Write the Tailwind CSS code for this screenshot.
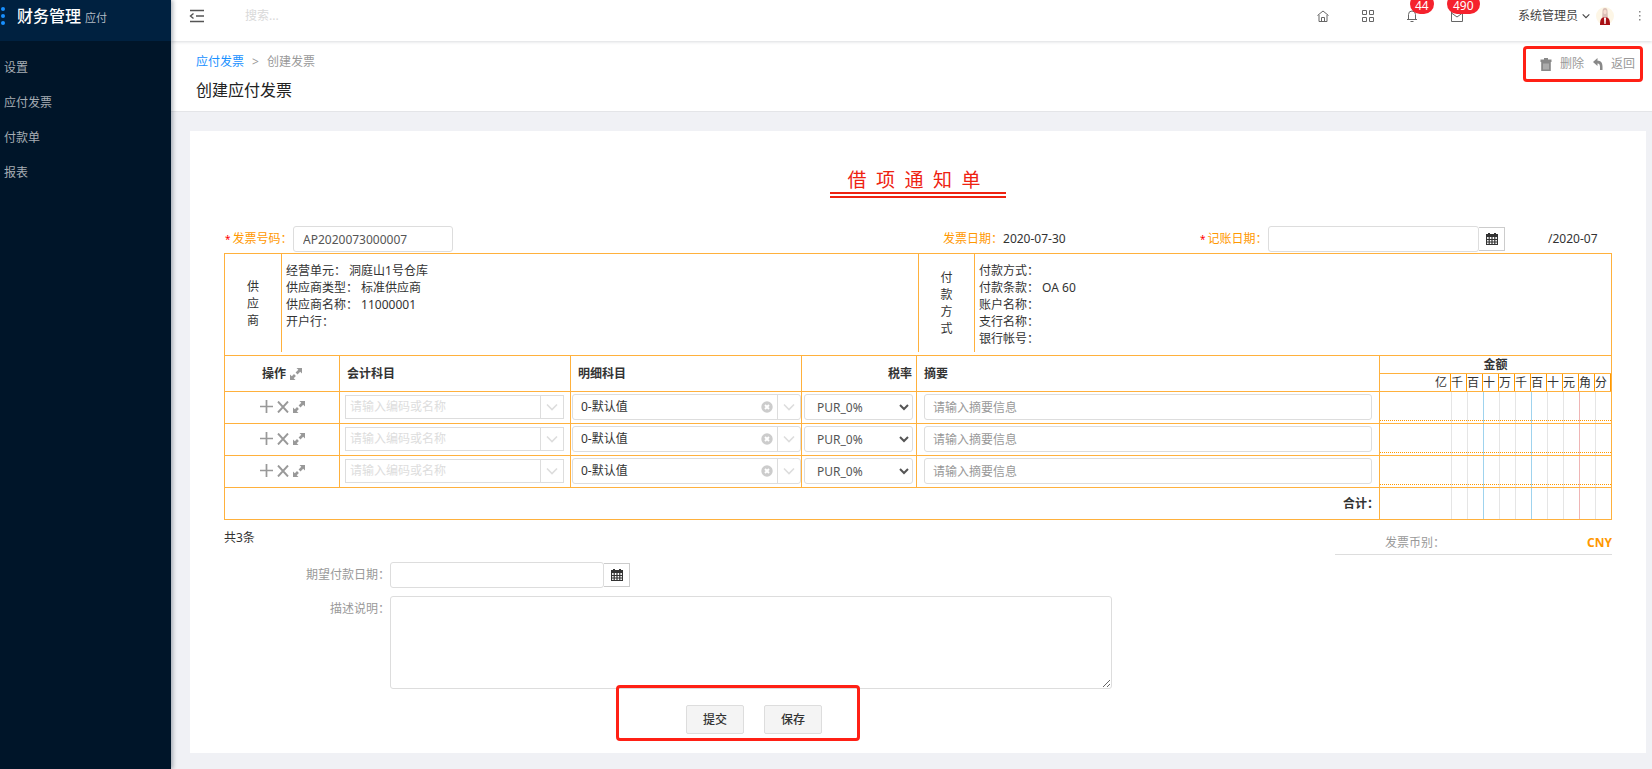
<!DOCTYPE html>
<html lang="zh-CN">
<head>
  <meta charset="UTF-8" />
  <meta name="viewport" content="width=device-width, initial-scale=1.0" />
  <title>创建应付发票</title>
  <script src="https://cdn.jsdelivr.net/npm/@tailwindcss/browser@4"></script>
</head>
<body class="flex min-h-screen bg-[#f0f1f5] font-['Noto_Sans','Noto_Sans_CJK_SC',sans-serif] text-xs text-[#333]">

  <!-- icons -->
  <svg class="hidden">
    <symbol id="i-expand" viewBox="0 0 12 12">
      <path d="M6.500 0H12v5.500l-1.800-1.800-2.700 2.700-1.900-1.900 2.700-2.700zM5.500 12H0V6.500l1.800 1.800 2.200-2.200 1.900 1.900-2.200 2.200z" fill="currentColor" />
    </symbol>
    <symbol id="i-plus" viewBox="0 0 12 12">
      <path d="M6 0v12M0 6h12" stroke="currentColor" stroke-width="1.600" fill="none" />
    </symbol>
    <symbol id="i-cross" viewBox="0 0 12 12">
      <path d="M1 .5l10 11M11 .5L1 11.500" stroke="currentColor" stroke-width="1.900" fill="none" />
    </symbol>
    <symbol id="i-down" viewBox="0 0 12 12">
      <path d="M1 3.500l5 5 5-5" stroke="currentColor" stroke-width="1.600" fill="none" />
    </symbol>
    <symbol id="i-clear" viewBox="0 0 12 12">
      <circle cx="6" cy="6" r="5.700" fill="currentColor" />
      <path d="M4 4l4 4M8 4L4 8" stroke="#fff" stroke-width="1.900" />
    </symbol>
    <symbol id="i-calendar" viewBox="0 0 12 12">
      <path d="M0 1h2V0h2v1h4V0h2v1h2v3H0z" fill="currentColor" />
      <path d="M.5 4v7.500h11V4M.5 6.500h11M.5 9h11M3.200 4v7.500M6 4v7.500M8.800 4v7.500" stroke="currentColor" stroke-width="1.200" fill="none" />
    </symbol>
  </svg>

  <!-- sidebar -->
  <aside class="z-10 w-[171px] shrink-0 bg-[#001529] shadow-[2px_0_4px_rgba(0,21,41,0.3)]">
    <div class="flex h-[41px] items-start bg-[#002140] pt-1 pl-px">
      <svg class="mt-[3px] h-[18px] w-1" viewBox="0 0 4 18" fill="#1890ff">
        <circle cx="2" cy="2" r="2" /><circle cx="2" cy="9" r="2" /><circle cx="2" cy="16" r="2" />
      </svg>
      <div class="ml-3 flex items-baseline gap-1">
        <span class="text-base leading-6 font-medium text-white">财务管理</span>
        <span class="text-[11px] leading-6 text-[#b3bcc5]">应付</span>
      </div>
    </div>
    <nav class="flex flex-col pt-[9px] pl-1 leading-[35px] text-[#a6adb4]">
      <a href="#">设置</a>
      <a href="#">应付发票</a>
      <a href="#">付款单</a>
      <a href="#">报表</a>
    </nav>
  </aside>

  <div class="min-w-0 flex-1">
    <!-- top bar -->
    <header class="relative flex h-[41px] items-start justify-between bg-white pr-[11px] pl-[18px] shadow-[0_1px_3px_rgba(0,21,41,0.15)]">
      <div class="flex h-8 items-center">
        <button type="button" aria-label="收起菜单">
          <svg class="h-[14px] w-4" viewBox="0 0 16 14" fill="none" stroke="#555" stroke-width="1.400">
            <path d="M1 1.500h14M7 7h8M1 12.500h14M4.500 4.500L1.500 7l3 2.500" />
          </svg>
        </button>
        <input type="text" placeholder="搜索..." aria-label="搜索" class="ml-10 w-48 outline-none placeholder:text-[#d9d9d9]" />
      </div>
      <div class="flex h-8 items-center text-[#666]">
        <a href="#" aria-label="首页" class="mr-[33px]">
          <svg class="h-3 w-3" viewBox="0 0 12 12" fill="none" stroke="currentColor">
            <path d="M.5 5.500L6 1l5.500 4.500M2 5v6.500h8V5M4.500 11V7.500h3V11" />
          </svg>
        </a>
        <a href="#" aria-label="应用" class="mr-[32px]">
          <svg class="h-3 w-3" viewBox="0 0 12 12" fill="none" stroke="currentColor">
            <path d="M.5.5h4v4h-4zM7.500.5h4v4h-4zM.5 7.500h4v4h-4zM7.500 7.500h4v4h-4z" />
          </svg>
        </a>
        <a href="#" aria-label="通知" class="relative mr-[33px]">
          <svg class="h-3 w-3" viewBox="0 0 12 12" fill="none" stroke="currentColor">
            <path d="M1 9.500h10M2.500 9.500v-5a3.500 3.500 0 0 1 7 0v5M4.500 11.500h3" />
          </svg>
          <span class="absolute bottom-2 left-1 h-5 rounded-full bg-[#f5222d] px-[5px] pt-1 leading-4 text-white">44</span>
        </a>
        <a href="#" aria-label="邮件" class="relative mr-[55px]">
          <svg class="h-3 w-3" viewBox="0 0 12 12" fill="none" stroke="currentColor">
            <path d="M.5 1.500h11v10H.5zM.5 3L6 7l5.500-4" />
          </svg>
          <span class="absolute bottom-2 left-[-4px] h-5 rounded-full bg-[#f5222d] px-[6px] pt-1 leading-4 text-white">490</span>
        </a>
        <button type="button" class="flex items-center text-[#444]">
          系统管理员
          <svg class="ml-1 h-2 w-2"><use href="#i-down" /></svg>
          <svg class="ml-[6px] h-[18px] w-[18px]" viewBox="0 0 18 18">
            <circle cx="9" cy="9" r="9" fill="#fdf6e6" />
            <path d="M6.500 4a2.500 3 0 0 1 5 0l.3 6H6.200z" fill="#d9bfb6" />
            <ellipse cx="9" cy="5" rx="1.600" ry="2.200" fill="#f6ddd0" />
            <path d="M4 18c0-5 1-8 5-8s5 3 5 8z" fill="#a80f14" />
            <path d="M8 10.500h2L9.600 17H8.400z" fill="#fff" />
          </svg>
        </button>
        <button type="button" aria-label="更多" class="ml-6">
          <svg class="h-3 w-[3px]" viewBox="0 0 3 12" fill="#888">
            <path d="M1 1h1.500v1.500H1zM1 5h1.500v1.500H1zM1 9h1.500v1.500H1z" />
          </svg>
        </button>
      </div>
    </header>

    <!-- page heading -->
    <div class="flex h-[71px] justify-between border-b border-[#e4e5e8] bg-white pr-[9px] pl-[25px]">
      <div class="pt-3">
        <nav class="flex gap-2 leading-[18px] text-[#999]">
          <a href="#" class="text-[#1890ff]">应付发票</a>
          <span>&gt;</span>
          <span>创建发票</span>
        </nav>
        <h1 class="mt-[7px] text-base leading-6 text-[#222]">创建应付发票</h1>
      </div>
      <div class="mt-[5px] flex h-9 items-center rounded border-[3px] border-[#ff2015] pr-[5px] pl-[14px] text-[#999]">
        <button type="button" class="flex items-center">
          <svg class="mr-2 h-[13px] w-3" viewBox="0 0 12 13" fill="#888">
            <path d="M.5 1.500h3.500V0h4v1.500h3.500V4H.5zM1.200 4h9.600v9H1.200z" />
            <path d="M4 5.500v6M6 5.500v6M8 5.500v6" stroke="#fff" stroke-width=".6" />
          </svg>
          删除
        </button>
        <button type="button" class="ml-[9px] flex items-center">
          <svg class="mr-2 h-3 w-[10px]" viewBox="0 0 10 12" fill="#888">
            <path d="M0 4l4.500-4v2.700C8.500 2.700 10 5 9.500 12H7c.3-4.500-.3-6.500-2.500-6.500V8z" />
          </svg>
          返回
        </button>
      </div>
    </div>

    <main class="mt-[19px] mr-[6px] mb-4 ml-[19px] bg-white px-[34px] pb-[19px]">
      <div class="flex justify-center pt-[38px]">
        <h2 class="w-[176px] border-b-6 border-double border-[#ee2211] pr-2 text-center font-['Liberation_Serif','Noto_Sans_CJK_SC',serif] text-[19px] leading-[23px] text-[#ee2211]">借&ensp;项&ensp;通&ensp;知&ensp;单</h2>
      </div>

      <form id="invoiceForm">
        <div class="mt-7 grid grid-cols-[719fr_257fr_412fr] items-center text-[#ff9800]">
          <div class="flex items-center">
            <label for="invoiceNo" class="w-[69px] pl-px"><span class="mr-[2px] text-[10px] text-[#f00]">*</span>发票号码：</label>
            <input type="text" id="invoiceNo" value="AP2020073000007" class="h-[26px] w-40 rounded-[3px] border border-[#ddd] px-[9px] text-[#555]" />
          </div>
          <div>发票日期：<span class="text-[#333]">2020-07-30</span></div>
          <div class="flex items-center">
            <label for="postDate" class="w-[68px]"><span class="mr-[2px] text-[10px] text-[#f00]">*</span>记账日期：</label>
            <input type="text" id="postDate" class="h-[26px] min-w-0 flex-1 rounded-[3px] border border-[#ddd] px-[9px] text-[#555]" />
            <button type="button" aria-label="选择日期" class="flex h-6 w-[26px] items-center justify-center border border-l-0 border-[#ccc] text-[#333]">
              <svg class="h-3 w-3"><use href="#i-calendar" /></svg>
            </button>
            <span class="ml-[43px] w-16 text-[#333]">/2020-07</span>
          </div>
        </div>

        <!-- supplier and payment -->
        <div class="mt-px flex h-[103px] items-start border border-[#ffb13d] leading-[17px]">
          <div class="flex w-1/2">
            <div class="flex h-[98px] w-[57px] flex-col items-center justify-center border-r border-[#ffb13d]">
              <span>供</span><span>应</span><span>商</span>
            </div>
            <div class="pt-2 pl-1">
              <p>经营单元： 洞庭山1号仓库</p>
              <p>供应商类型： 标准供应商</p>
              <p>供应商名称： 11000001</p>
              <p>开户行：</p>
            </div>
          </div>
          <div class="flex w-1/2">
            <div class="flex h-[98px] w-[57px] flex-col items-center justify-center border-x border-[#ffb13d]">
              <span>付</span><span>款</span><span>方</span><span>式</span>
            </div>
            <div class="pt-2 pl-1">
              <p>付款方式：</p>
              <p>付款条款： OA 60</p>
              <p>账户名称：</p>
              <p>支行名称：</p>
              <p>银行帐号：</p>
            </div>
          </div>
        </div>

        <table class="w-full table-fixed border-separate border-spacing-0 border-l border-[#ffb13d]">
          <colgroup>
            <col class="w-[115px]" />
            <col class="w-[231px]" />
            <col class="w-[231px]" />
            <col class="w-[115px]" />
            <col />
            <col class="w-[232px]" />
          </colgroup>
          <thead class="leading-[17px]">
            <tr class="h-[18px]">
              <th rowspan="2" class="border-r border-b border-[#ffb13d] p-0 font-bold">
                <span class="inline-flex items-center gap-1">操作 <svg class="h-3 w-3 text-[#999]"><use href="#i-expand" /></svg></span>
              </th>
              <th rowspan="2" class="border-r border-b border-[#ffb13d] p-0 pl-[7px] text-left font-bold">会计科目</th>
              <th rowspan="2" class="border-r border-b border-[#ffb13d] p-0 pl-[7px] text-left font-bold">明细科目</th>
              <th rowspan="2" class="border-r border-b border-[#ffb13d] p-0 pr-1 text-right font-bold">税率</th>
              <th rowspan="2" class="border-r border-b border-[#ffb13d] p-0 pl-[7px] text-left font-bold">摘要</th>
              <th class="border-r border-b border-[#ffb13d] p-0 font-bold">金额</th>
            </tr>
            <tr class="h-[18px]">
              <th class="border-r border-b border-[#ffb13d] p-0 font-normal">
                <div id="units" class="flex justify-end"></div>
              </th>
            </tr>
          </thead>
          <tbody id="lines"></tbody>
          <tfoot>
            <tr class="h-8">
              <td colspan="5" class="border-r border-b border-[#ffb13d] p-0 text-right font-bold">合计：</td>
              <td class="border-r border-b border-[#ffb13d] p-0">
                <div id="total" class="flex h-[31px] justify-end"></div>
              </td>
            </tr>
          </tfoot>
        </table>

        <div class="flex items-start justify-between">
          <p class="pt-[9px] leading-[18px]">共3条</p>
          <div class="flex h-[35px] w-[277px] items-center justify-between border-b border-[#ddd] pt-3 pl-[50px]">
            <span class="text-[#999]">发票币别：</span>
            <span class="font-bold text-[#ff9800]">CNY</span>
          </div>
        </div>

        <div class="mt-[7px] flex items-center">
          <label for="expectDate" class="w-[166px] text-right text-[#999]">期望付款日期：</label>
          <input type="text" id="expectDate" class="h-[26px] w-[214px] rounded-[3px] border border-[#ddd] px-[9px]" />
          <button type="button" aria-label="选择日期" class="flex h-6 w-[26px] items-center justify-center border border-l-0 border-[#ccc] text-[#333]">
            <svg class="h-3 w-3"><use href="#i-calendar" /></svg>
          </button>
        </div>
        <div class="mt-2 flex items-start">
          <label for="remark" class="w-[166px] pt-[5px] text-right text-[#999]">描述说明：</label>
          <textarea id="remark" class="h-[93px] w-[52%] resize rounded-[3px] border border-[#ddd] p-2"></textarea>
        </div>

        <div class="relative mt-4 ml-[462px] flex w-fit gap-5">
          <span class="pointer-events-none absolute top-[-20px] right-[-38px] bottom-[-7px] left-[-70px] rounded border-[3px] border-[#ff2015]"></span>
          <button type="submit" class="h-[29px] w-[58px] rounded-[2px] border border-[#ddd] bg-[#f4f4f4] font-medium">提交</button>
          <button type="button" class="h-[29px] w-[58px] rounded-[2px] border border-[#ddd] bg-[#f4f4f4] font-medium">保存</button>
        </div>
      </form>
    </main>
  </div>

  <script>
    const units = ['亿', '千', '百', '十', '万', '千', '百', '十', '元', '角', '分'];

    document.getElementById('units').innerHTML = units
      .map((u) => `<span class="w-4 border-r border-[#ff9800] text-left">${u}</span>`)
      .join('');

    // thousands separators are blue, the decimal separator is pink
    const rulers = units.slice(1).map((u, i) => {
      if (i === 2 || i === 5) return '<i class="w-4 border-l border-[#9fd3ee]"></i>';
      if (i === 8) return '<i class="w-4 border-l border-[#efb5b5]"></i>';
      return '<i class="w-4 border-l border-[#e5e5e5]"></i>';
    }).join('');

    document.getElementById('total').innerHTML = rulers;

    const line = (n) => `
      <tr class="h-8">
        <td class="border-r border-b border-[#ffb13d] p-0 pb-[2px]">
          <div class="flex items-center justify-center gap-1 text-[#999]">
            <button type="button" aria-label="添加"><svg class="h-[13px] w-[13px]"><use href="#i-plus" /></svg></button>
            <button type="button" aria-label="删除"><svg class="h-3 w-3"><use href="#i-cross" /></svg></button>
            <button type="button" aria-label="展开"><svg class="h-3 w-3"><use href="#i-expand" /></svg></button>
          </div>
        </td>
        <td class="border-r border-b border-[#ffb13d] p-0 pr-[6px] pb-px pl-[5px]">
          <div class="flex h-6 border border-[#ddd]">
            <input type="text" aria-label="会计科目 ${n}" placeholder="请输入编码或名称" class="min-w-0 flex-1 px-1 outline-none placeholder:text-[#ddd]" />
            <button type="button" aria-label="选择科目" class="flex w-[23px] items-center justify-center border-l border-[#ddd] text-[#ddd]"><svg class="h-3 w-3"><use href="#i-down" /></svg></button>
          </div>
        </td>
        <td class="border-r border-b border-[#ffb13d] p-0 pb-px pl-px">
          <div class="flex h-[26px] items-stretch rounded-[3px] border border-[#ddd]">
            <input type="text" aria-label="明细科目 ${n}" value="0-默认值" class="min-w-0 flex-1 px-2 outline-none" />
            <button type="button" aria-label="清除" class="mr-1 text-[#ccc]"><svg class="h-3 w-3"><use href="#i-clear" /></svg></button>
            <button type="button" aria-label="选择明细" class="flex w-[23px] items-center justify-center border-l border-[#ddd] text-[#ddd]"><svg class="h-3 w-3"><use href="#i-down" /></svg></button>
          </div>
        </td>
        <td class="border-r border-b border-[#ffb13d] p-0 pr-[3px] pb-px pl-[2px]">
          <select aria-label="税率 ${n}" class="block h-[26px] w-full rounded-[3px] border border-[#ddd] bg-white pl-2 text-[#555]">
            <option>PUR_0%</option>
          </select>
        </td>
        <td class="border-r border-b border-[#ffb13d] p-0 px-[7px] pb-px">
          <input type="text" aria-label="摘要 ${n}" placeholder="请输入摘要信息" class="block h-[26px] w-full rounded-[3px] border border-[#ddd] px-2 placeholder:text-[#999]" />
        </td>
        <td class="border-r border-b border-[#ffb13d] p-0">
          <div class="relative flex h-[31px] justify-end">
            ${rulers}
            <span class="absolute inset-x-0 bottom-[2px] border-b border-dotted border-[#ff9800]"></span>
          </div>
        </td>
      </tr>`;

    document.getElementById('lines').innerHTML = [1, 2, 3].map(line).join('');

    document.getElementById('invoiceForm').addEventListener('submit', (e) => e.preventDefault());
  </script>
</body>
</html>
